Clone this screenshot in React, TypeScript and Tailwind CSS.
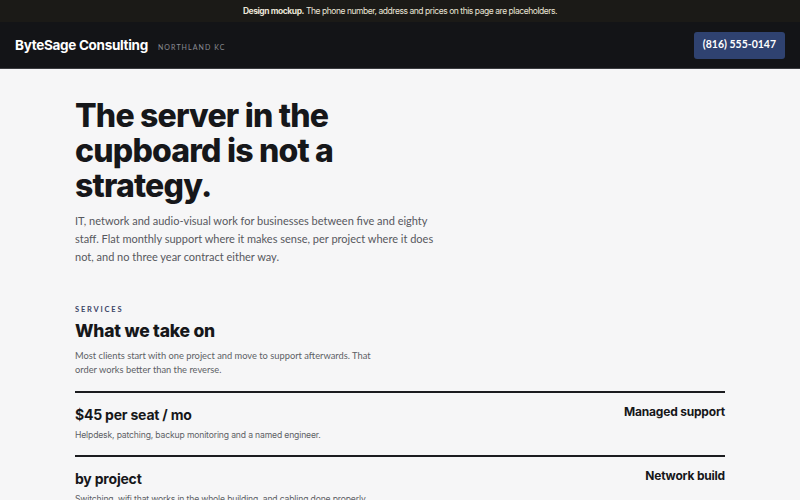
import React from "react";

const display = { fontFamily: "Inter, 'Liberation Sans', sans-serif" };
const body = { fontFamily: "Lato, 'Open Sans', sans-serif" };

type Service = {
  price: string;
  name: string;
  desc: string;
};

const services: Service[] = [
  {
    price: "$45 per seat / mo",
    name: "Managed support",
    desc: "Helpdesk, patching, backup monitoring and a named engineer.",
  },
  {
    price: "by project",
    name: "Network build",
    desc: "Switching, wifi that works in the whole building, and cabling done properly.",
  },
];

export default function App() {
  return (
    <div className="min-h-screen bg-[#f6f6f7] text-[#16171a]" style={body}>
      {/* banner */}
      <div
        className="h-[22px] bg-[#1b1a17] text-[#e9e4d6] text-[8.5px] tracking-[-0.45px] flex items-center justify-center"
        style={display}
      >
        <span>
          <b className="font-bold">Design mockup.</b> The phone number, address and prices on this page are placeholders.
        </span>
      </div>

      {/* header */}
      <header className="h-[47px] bg-[#131417] border-b border-[#3a3b3f] flex items-center justify-between px-[15px]">
        <div className="flex items-baseline gap-[10px]">
          <span className="text-white text-[13.5px] font-bold tracking-[-0.3px]" style={display}>
            ByteSage Consulting
          </span>
          <span className="text-[#8b8d93] text-[7px] tracking-[1.1px] uppercase">Northland KC</span>
        </div>
        <a className="bg-[#2f4270] text-white text-[10.5px] font-bold rounded-[3px] px-[9px] h-[27px] flex items-center">
          (816) 555-0147
        </a>
      </header>

      <main className="px-[75px]">
        {/* hero */}
        <section className="pt-[29px]">
          <h1
            className="text-[32px] leading-[35px] font-extrabold tracking-[-0.8px] max-w-[300px]"
            style={display}
          >
            The server in the cupboard is not a strategy.
          </h1>
          <p className="mt-[9px] max-w-[360px] text-[11px] leading-[18px] text-[#56585e]">
            IT, network and audio-visual work for businesses between five and eighty staff. Flat monthly support where it
            makes sense, per project where it does not, and no three year contract either way.
          </p>
        </section>

        {/* services */}
        <section className="pt-[38px]">
          <div className="text-[7.5px] leading-[11px] tracking-[1.8px] font-bold text-[#3b4466] uppercase">
            Services
          </div>
          <h2 className="mt-[4px] text-[17.5px] leading-[24px] font-extrabold tracking-[-0.2px]" style={display}>
            What we take on
          </h2>
          <p className="mt-[6px] max-w-[315px] text-[9.3px] leading-[14px] text-[#5d5f65]">
            Most clients start with one project and move to support afterwards. That order works better than the
            reverse.
          </p>

          <div className="mt-[14px]">
            {services.map((s) => (
              <div key={s.name} className="border-t-2 border-[#1b1c1f] pt-[9px] pb-[14px]">
                <div className="flex justify-between items-start">
                  <div>
                    <div className="mt-[3px] text-[14px] leading-[20px] font-bold tracking-[-0.2px]" style={display}>
                      {s.price}
                    </div>
                    <div
                      className="mt-[4px] text-[8.6px] leading-[12px] tracking-[-0.15px] text-[#5d5f65]"
                      style={display}
                    >
                      {s.desc}
                    </div>
                  </div>
                  <div className="mt-[2px] text-[12px] leading-[15px] font-bold tracking-[-0.2px]" style={display}>
                    {s.name}
                  </div>
                </div>
              </div>
            ))}
          </div>
        </section>
      </main>
    </div>
  );
}
